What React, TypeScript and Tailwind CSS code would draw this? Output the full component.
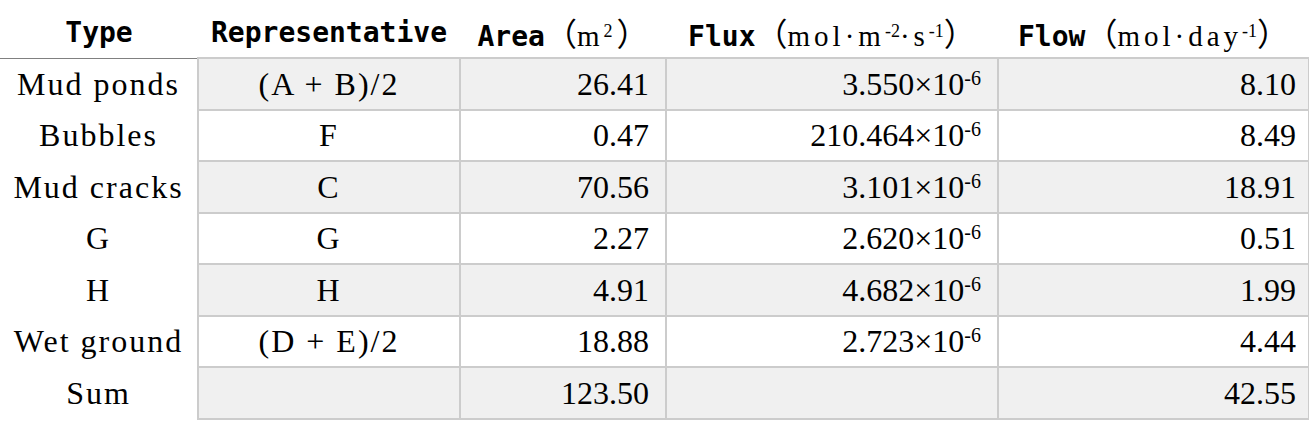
import React from "react";

type Row = {
  type: string;
  rep: string;
  area: string;
  flux: string;
  flow: string;
};

const rows: Row[] = [
  { type: "Mud ponds", rep: "(A + B)/2", area: "26.41", flux: "3.550", flow: "8.10" },
  { type: "Bubbles", rep: "F", area: "0.47", flux: "210.464", flow: "8.49" },
  { type: "Mud cracks", rep: "C", area: "70.56", flux: "3.101", flow: "18.91" },
  { type: "G", rep: "G", area: "2.27", flux: "2.620", flow: "0.51" },
  { type: "H", rep: "H", area: "4.91", flux: "4.682", flow: "1.99" },
  { type: "Wet ground", rep: "(D + E)/2", area: "18.88", flux: "2.723", flow: "4.44" },
  { type: "Sum", rep: "", area: "123.50", flux: "", flow: "42.55" },
];

// header pieces: mono label + full-width parens + serif unit
const mono = "font-['DejaVu_Sans_Mono',monospace] font-bold text-[28px]";
const unit = "font-['Liberation_Serif',serif] font-normal text-[29px] tracking-[4px]";
const paren = "font-['Noto_Sans_CJK_SC',sans-serif] font-normal text-[32px]";
const cell = "border-2 border-[#cccccc]";

const App = () => {
  return (
    <div className="w-[1309px] h-[421px] bg-white overflow-hidden text-black font-['Liberation_Serif',serif]">
      <table className="table-fixed border-collapse w-[1309px]">
        <colgroup>
          <col className="w-[198px]" />
          <col className="w-[262px]" />
          <col className="w-[206px]" />
          <col className="w-[332px]" />
          <col className="w-[311px]" />
        </colgroup>
        <thead className="leading-none">
          <tr className="h-[58px]">
            <th className="border-b border-[#808080] text-center align-middle pt-[9px]">
              <span className={mono}>Type</span>
            </th>
            <th className="text-center align-middle pt-[9px]">
              <span className={mono}>Representative</span>
            </th>
            <th className="text-center align-middle pt-[9px] whitespace-nowrap">
              <span className={mono}>Area</span>
              <span className={paren}>（</span>
              <span className={unit}>
                m<sup className="text-[18px]">2</sup>
              </span>
              <span className={paren}>）</span>
            </th>
            <th className="text-center align-middle pt-[9px] whitespace-nowrap">
              <span className={mono}>Flux</span>
              <span className={paren}>（</span>
              <span className={unit}>
                mol·m<sup className="text-[18px] tracking-normal">-2</sup>·s<sup className="text-[18px] tracking-normal">-1</sup>
              </span>
              <span className={paren}>）</span>
            </th>
            <th className="text-center align-middle pt-[9px] whitespace-nowrap">
              <span className={mono}>Flow</span>
              <span className={paren}>（</span>
              <span className={unit}>
                mol·day<sup className="text-[18px] tracking-normal">-1</sup>
              </span>
              <span className={paren}>）</span>
            </th>
          </tr>
        </thead>
        <tbody className="text-[32px] leading-none">
          {rows.map((r, i) => {
            const bg = i % 2 === 0 ? "bg-[#f0f0f0]" : "bg-white";
            return (
              <tr key={r.type} className="h-[51.5px]">
                <td className="text-center align-middle tracking-[2px] whitespace-nowrap">{r.type}</td>
                <td className={`${cell} ${bg} text-center align-middle tracking-[2px] whitespace-nowrap`}>{r.rep}</td>
                <td className={`${cell} ${bg} text-right align-middle pr-[16px]`}>{r.area}</td>
                <td className={`${cell} ${bg} text-right align-middle pr-[16px] whitespace-nowrap`}>
                  {r.flux && (
                    <>
                      {r.flux}×10<sup className="text-[20px]">-6</sup>
                    </>
                  )}
                </td>
                <td className={`${cell} ${bg} text-right align-middle pr-[12px]`}>{r.flow}</td>
              </tr>
            );
          })}
        </tbody>
      </table>
    </div>
  );
};

export default App;
